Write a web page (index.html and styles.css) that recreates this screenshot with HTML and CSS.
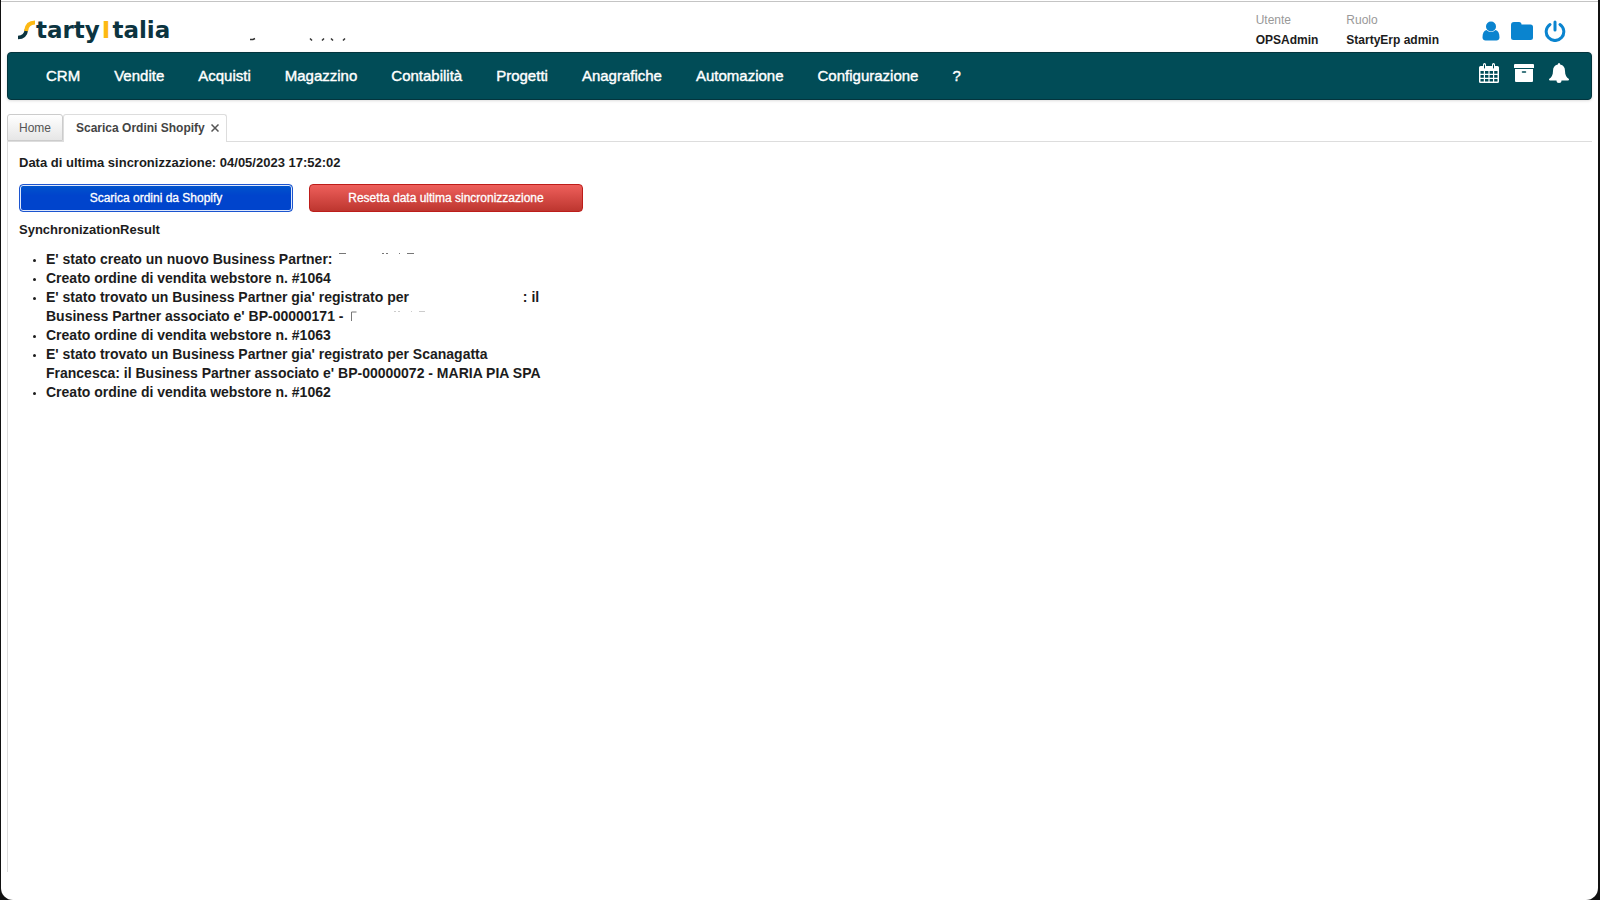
FILE: index.html
```html
<!DOCTYPE html>
<html lang="it">
<head>
<meta charset="utf-8">
<title>Scarica Ordini Shopify</title>
<link rel="stylesheet" href="styles.css">
</head>
<body>
<div class="window">
  <header class="header">
    <div class="logo">
      <svg class="logo-s" width="18" height="20" viewBox="0 0 18 20"><path d="M0 17.500Q7.500 17.500 8.500 9.500" fill="none" stroke="#0c3440" stroke-width="3.500"/><path d="M8 11Q9 2.500 17 2.500" fill="none" stroke="#fdb913" stroke-width="4"/></svg>
      <span>tarty</span><span class="logo-i">I</span><span>talia</span>
    </div>
    <svg class="org" width="152" height="8" viewBox="0 0 152 8" fill="none" stroke="#333" stroke-width="1.500"><path d="M47 5.500h3l2-1M107 4.500l2 2M119 6.500l2-2M128 4.500l2 2M140 6.500l2-2"/></svg>
    <dl class="session">
      <div><dt>Utente</dt><dd>OPSAdmin</dd></div>
      <div><dt>Ruolo</dt><dd>StartyErp admin</dd></div>
    </dl>
    <div class="tools">
      <button aria-label="Utente"><svg width="18" height="20" viewBox="0 0 18 20"><circle cx="9" cy="5.500" r="5"/><path d="M4.500 9C2 9.500.500 12 .500 16.500.500 18.500 2 19.500 3.500 19.500h11c1.500 0 3-1 3-3 0-4.500-1.500-7-4-7.500-2.500 2.500-6.500 2.500-9 0z"/></svg></button>
      <button aria-label="Documenti"><svg width="22" height="18" viewBox="0 0 22 18"><path d="M3 0h5q2.500 0 2.500 2.500h9Q22 2.500 22 5v10.500Q22 18 19.500 18h-17Q0 18 0 15.500V3Q0 0 3 0z"/></svg></button>
      <button aria-label="Esci"><svg width="22" height="22" viewBox="0 0 22 22" fill="none" stroke="#0a84cf" stroke-width="3" stroke-linecap="round"><path d="M6 4.500a8.800 8.800 0 1 0 10 0M11 2v8"/></svg></button>
    </div>
  </header>
  <nav class="nav">
    <a href="#">CRM</a><a href="#">Vendite</a><a href="#">Acquisti</a><a href="#">Magazzino</a><a href="#">Contabilità</a><a href="#">Progetti</a><a href="#">Anagrafiche</a><a href="#">Automazione</a><a href="#">Configurazione</a><a href="#">?</a>
    <div class="nav-tools">
      <button aria-label="Calendario"><svg width="20" height="20" viewBox="0 0 20 20"><path fill-rule="evenodd" d="M1.500 3H4V1.500a1.500 1.500 0 0 1 3 0V3h6V1.500a1.500 1.500 0 0 1 3 0V3h2.500Q20 3 20 4.500v14q0 1.500-1.500 1.500h-17Q0 20 0 18.500v-14Q0 3 1.500 3zM1.500 8v2.800h3.300V8zm4.500 0v2.800h3.400V8zm4.600 0v2.800H14V8zm4.600 0v2.800h3.300V8zM1.500 12v2.800h3.300V12zM6 12v2.800h3.400V12zm4.600 0v2.800H14V12zm4.600 0v2.800h3.300V12zM1.500 16v2.500h3.300V16zM6 16v2.500h3.400V16zm4.600 0v2.500H14V16zm4.600 0v2.500h3.300V16z"/><path d="M5.500 2v3M14.500 2v3" stroke="#014c57" stroke-linecap="round"/></svg></button>
      <button aria-label="Archivio"><svg width="20" height="18" viewBox="0 0 20 18"><path d="M1 0h18q1 0 1 1v3H0V1q0-1 1-1zM1 5h18v12q0 1-1 1H2q-1 0-1-1z"/><path d="M8.500 8h3" stroke="#014c57" stroke-width="1.500" stroke-linecap="round"/></svg></button>
      <button aria-label="Notifiche"><svg width="20" height="20" viewBox="0 0 20 20"><path d="M10 0q1.200 0 1.200 1.500C14.500 2 16 4.500 16 8c0 4 1.500 6.500 4 8 0 1-.500 1.500-1.500 1.500h-6a2.500 2.500 0 0 1-5 0h-6C.500 17.500 0 17 0 16c2.500-1.500 4-4 4-8 0-3.500 1.500-6 4.800-6.500Q8.800 0 10 0z"/></svg></button>
    </div>
  </nav>
  <div class="tabs">
    <button class="tab">Home</button>
    <button class="tab active">Scarica Ordini Shopify <svg width="8" height="8" viewBox="0 0 8 8"><path d="M.500.500l7 7M7.500.500l-7 7" stroke="#555" stroke-width="1.500"/></svg></button>
  </div>
  <main class="panel">
    <p class="label">Data di ultima sincronizzazione: 04/05/2023 17:52:02</p>
    <div class="actions">
      <button class="btn primary">Scarica ordini da Shopify</button>
      <button class="btn danger">Resetta data ultima sincronizzazione</button>
    </div>
    <p class="label">SynchronizationResult</p>
    <ul class="results">
      <li>E' stato creato un nuovo Business Partner: <svg class="mark" width="78" height="12" viewBox="0 0 78 12"><path d="M3 1.500h7M46 1.500h2M50 1.500h2M63 1.500h1M71 1.500h7"/></svg></li>
      <li>Creato ordine di vendita webstore n. #1064</li>
      <li>E' stato trovato un Business Partner gia' registrato per <span class="blank"></span>: il<br>Business Partner associato e' BP-00000171 - <svg class="mark" width="84" height="12" viewBox="0 0 84 12"><path d="M4.500 12V3h5"/><path class="faint" d="M47 2.500h2M51 2.500h2M64 2.500h1M72 2.500h6"/></svg></li>
      <li>Creato ordine di vendita webstore n. #1063</li>
      <li>E' stato trovato un Business Partner gia' registrato per Scanagatta<br>Francesca: il Business Partner associato e' BP-00000072 - MARIA PIA SPA</li>
      <li>Creato ordine di vendita webstore n. #1062</li>
    </ul>
  </main>
</div>
</body>
</html>
```
FILE: styles.css
```css
* { box-sizing: border-box; }
html { background: #111; }
body { margin: 0; font-family: "Liberation Sans", Arial, sans-serif; color: #1c1c1c; }
button { font-family: inherit; border: 0; background: none; padding: 0; cursor: pointer; }
.window {
  min-height: 100vh; display: flex; flex-direction: column;
  margin: 0 2px 0 1px; padding: 1px 6px 28px;
  background: #fff; border-top: 1px solid #fff; border-radius: 0 0 12px 12px;
  box-shadow: inset 0 1px #c4c4c4;
}
.header { display: flex; align-items: flex-start; height: 50px; padding: 0 26px 0 11px; }
.logo { display: flex; align-items: center; height: 50px; padding-top: 6px; width: 185px; font: bold 23px/30px "DejaVu Sans", sans-serif; color: #0c3440; }
.logo-i { padding: 0 2px; color: #fdb913; }
.org { margin-top: 32px; }
.session { display: flex; gap: 28px; margin: 9px 43px 0 auto; font-size: 12px; line-height: 18px; }
.session dt { color: #999; }
.session dd { margin: 2px 0 0; font-weight: bold; }
.tools, .nav-tools { display: flex; align-items: center; }
.tools { gap: 11px; margin-top: 18px; }
.tools svg { display: block; fill: #0a84cf; }
.tools [aria-label="Esci"] svg { fill: none; }
.nav {
  display: flex; align-items: center; gap: 34px; height: 48px; padding: 0 22px 0 38px;
  background: #014c57; border: 1px solid #03343d; border-radius: 4px;
  box-shadow: 0 1px 3px #0002;
}
.nav a { color: #fff; font-size: 15px; line-height: 20px; text-decoration: none; -webkit-text-stroke: 0.400px #fff; }
.nav-tools { gap: 15px; margin: 0 0 6px auto; }
.nav-tools svg { display: block; fill: #fff; }
.tabs { display: flex; align-items: flex-end; height: 42px; border-bottom: 1px solid #ddd; }
.tab {
  height: 27px; padding: 0 11px; font-size: 12px; color: #555;
  border: 1px solid #ccc; border-radius: 3px 3px 0 0; background: linear-gradient(#fff, #e6e6e6);
}
.tab.active {
  display: flex; align-items: center; gap: 6px; height: 28px; margin-bottom: -1px; padding: 0 7px 2px 12px;
  font-weight: bold; color: #444; border-color: #ddd; border-bottom: 0; background: #fff;
}
.panel { flex: 1; padding: 12px 11px; border-left: 1px solid #ddd; }
.label { margin: 0; font-size: 13px; line-height: 18px; font-weight: bold; }
.actions { display: flex; gap: 16px; margin: 12px 0 9px; }
.btn { width: 274px; height: 28px; border-radius: 4px; color: #fff; font-size: 12px; -webkit-text-stroke: 0.300px #fff; }
.primary { border: 1px solid #1c55cf; background: linear-gradient(#0055cc, #0044cc 40%); box-shadow: inset 0 0 0 1px #dfe8fb; }
.danger { border: 1px solid #bd1d1a; background: linear-gradient(#ee5f5b, #bd362f); }
.results { margin: 11px 0 0; padding-left: 27px; font-size: 14px; line-height: 19px; font-weight: bold; }
.results li::marker { font-size: 10px; }
.mark { fill: none; stroke: #777; stroke-width: 1; }
.faint { stroke: #ccc; }
.blank { display: inline-block; width: 110px; }
```
